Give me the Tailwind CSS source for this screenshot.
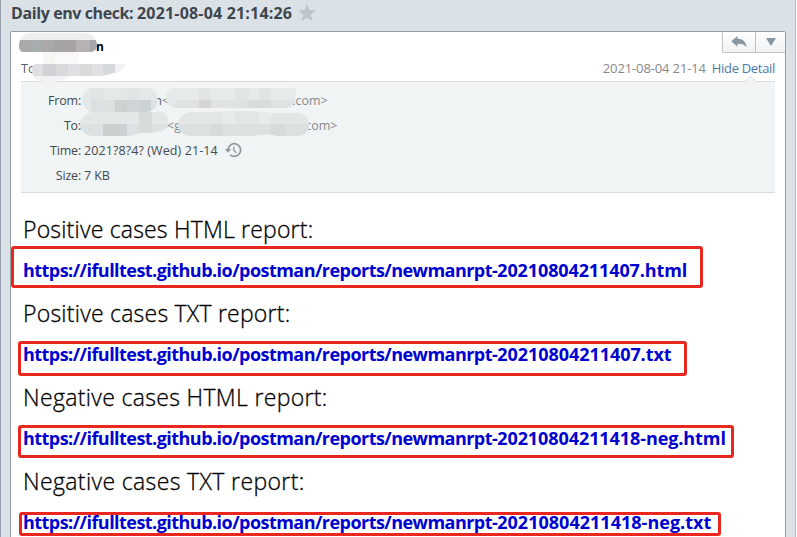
<!DOCTYPE html>
<html lang="en">
<head>
<meta charset="utf-8">
<title>Daily env check</title>
<script src="https://cdn.jsdelivr.net/npm/@tailwindcss/browser@4"></script>
</head>
<body class="w-[797px] h-[537px] overflow-hidden bg-white font-['Open_Sans','Noto_Sans',sans-serif]">
<div class="relative w-[796px] h-[537px] overflow-hidden bg-[#dae2e8] border-l border-r border-l-[#989fac] border-r-[#b4bdc3] flex flex-col">
  <header class="h-[31px] shrink-0 pl-[10px] flex items-center gap-[6px] pb-[4px]">
    <h1 class="text-[16px] font-bold leading-[27px] tracking-[-0.4px] text-[#40464d] whitespace-nowrap">Daily env check: <span class="tracking-[0.18px]">2021-08-04 21:14:26</span></h1>
    <svg class="w-[18px] h-[18px] -mt-px" viewBox="0 0 18 18"><path fill="#bfc4cb" d="M9 0l2.400 6 6.600.4-5.100 4.200 1.700 6.700L9 13.700l-5.600 3.600 1.700-6.700L0 6.400 6.600 6z"/></svg>
  </header>

  <main class="ml-[9px] w-[776px] h-[520px] shrink-0 bg-white border border-[#929da4] rounded-t-[2px] px-[10px]">
    <div class="flex justify-between h-[26px]">
      <div class="pl-[75px] pt-[5px] text-[12px] font-bold leading-[20px] text-black">n</div>
      <div class="flex h-[21px] w-[63px] -mr-[10px] border-l border-b border-[#bcc2c5] rounded-bl-[2px] bg-linear-to-b from-white to-[#eff1f3]">
        <div class="w-[33px] border-r border-[#bcc2c5] flex items-center justify-center">
          <svg class="w-[16px] h-[12px]" viewBox="0 0 16 12"><path fill="#8997a1" d="M6.500 0v2.800C12 2.800 15 6 15.600 11.500 13.800 8.500 11 7.600 6.500 7.700v3L.3 5.300z"/></svg>
        </div>
        <div class="flex-1 flex items-center justify-center">
          <svg class="w-[10px] h-[8px]" viewBox="0 0 10 8"><path fill="#8997a1" d="M0 0h10L5 8z"/></svg>
        </div>
      </div>
    </div>
    <div class="flex justify-between h-[23px] text-[13px] leading-[21px]">
      <span class="text-[#555b60] text-[12.500px]">To:</span>
      <div class="flex gap-[6px] whitespace-nowrap">
        <span class="text-[#888] tracking-[-0.13px]">2021-08-04 21-14</span>
        <span class="text-[#4b78a8] tracking-[-0.32px]">Hide Detail</span>
      </div>
    </div>
    <section class="h-[112px] w-[754px] bg-[#f0f4f4] border-t border-b border-[#d8dcdd] pt-[6px] text-[12.500px] leading-[25px] text-[#444a50] grid grid-cols-[60px_1fr] auto-rows-[25px] gap-x-[3px] whitespace-nowrap">
      <span class="text-right tracking-[-0.2px]">From:</span>
      <div class="flex text-[#858a8e]"><span class="w-[78px] text-right text-[#555b60]">n</span><span>&lt;</span><span class="ml-[123px]">.com&gt;</span></div>
      <span class="text-right tracking-[-0.2px]">To:</span>
      <div class="flex pl-[83px] text-[#858a8e]"><span>&lt;g</span><span class="ml-[121px]">.com&gt;</span></div>
      <span class="text-right tracking-[-0.2px]">Time:</span>
      <div class="flex items-center gap-[8px]"><span class="tracking-[0.1px]">2021?8?4? (Wed) 21-14</span>
        <svg class="w-[17px] h-[16px] -mt-px -ml-px" viewBox="0 0 17 16" fill="none" stroke="#92979b"><path stroke-width="1.700" d="M3 8a6.300 6.300 0 1 1 2.200 4.800"/><path fill="#92979b" stroke="none" d="M0 7h6L3 10.800z"/><path stroke-width="1.300" d="M8.800 4.500V8.200l2.600 2.600"/></svg>
      </div>
      <span class="text-right tracking-[-0.2px]">Size:</span><span class="tracking-[-0.1px]">7 KB</span>
    </section>

    <article class="pt-[15px] pl-[2px] text-[23px] font-light leading-[42px] text-black whitespace-nowrap">
      <p class="[-webkit-text-stroke:0.3px_black] tracking-[0.19px]">Positive cases HTML report:</p>
      <p class="h-[42px]"><a class="block text-[18px] font-bold tracking-[-0.54px] text-[#0000d0] leading-[41px]">https://ifulltest.github.io/postman/reports/newmanrpt-<span class="tracking-[-0.11px]">20210804211407.html</span></a></p>
      <p class="[-webkit-text-stroke:0.3px_black] tracking-[0.23px]">Positive cases TXT report:</p>
      <p class="h-[42px]"><a class="block text-[18px] font-bold tracking-[-0.54px] text-[#0000d0] leading-[41px]">https://ifulltest.github.io/postman/reports/newmanrpt-<span class="tracking-[-0.05px]">20210804211407.txt</span></a></p>
      <p class="[-webkit-text-stroke:0.3px_black] tracking-[0.33px]">Negative cases HTML report:</p>
      <p class="h-[42px]"><a class="block text-[18px] font-bold tracking-[-0.54px] text-[#0000d0] leading-[41px]">https://ifulltest.github.io/postman/reports/newmanrpt-<span class="tracking-[-0.08px]">20210804211418-neg.html</span></a></p>
      <p class="[-webkit-text-stroke:0.3px_black] tracking-[0.37px]">Negative cases TXT report:</p>
      <p class="h-[42px]"><a class="block text-[18px] font-bold tracking-[-0.54px] text-[#0000d0] leading-[41px]">https://ifulltest.github.io/postman/reports/newmanrpt-<span class="tracking-[0.02px]">20210804211418-neg.txt</span></a></p>
    </article>
  </main>

  <!-- Pointer of the details panel, privacy smudges and red markers lie over the mail -->
  <svg class="absolute top-0 -left-px w-[797px] h-[537px]" viewBox="0 0 797 537">
    <path d="M745 82l5.500-5.500 5.500 5.500z" fill="#f0f4f4"/><path d="M745 81.500l5.500-5.500 5.500 5.500" fill="none" stroke="#d8dcdd"/>
    <defs>
      <clipPath id="a"><path d="M19 46c0-7 4-13 11-13h54c9 0 13 6 13 13 0 4-4 6-8 6H24c-3 0-5-2-5-6z"/></clipPath>
      <clipPath id="b"><path d="M32 69c0-4 4-6 8-5h85c-1 6-5 9-12 9-8 3-14 3-22 3H70c-10 8-35 8-37 0z"/></clipPath>
      <clipPath id="c"><rect x="82.500" y="88" width="75" height="24" rx="11"/></clipPath>
      <clipPath id="d"><path d="M166 97c0-5 6-12 14-12h110c10 0 7 22-3 23H176c-6 0-10-6-10-11z"/></clipPath>
      <clipPath id="e"><path d="M80 124c0-6 7-12 15-12h60c6-2 13 1 13 7v6c0 5-8 8-28 8l-10 3H94c-8 0-14-5-14-12z"/></clipPath>
      <clipPath id="f"><path d="M178 124c0-7 8-12 14-12 30 0 60-3 78 1h27c8 0 12 6 12 12 0 7-5 11-12 11h-20l-8-2-20 2h-58c-7 0-13-5-13-12z"/></clipPath>
    </defs>
    <g clip-path="url(#a)"><path fill="#eeeeee" d="M19 32h80v20H19z"/><path fill="#aaa8a8" d="M19 40h35v12H19z"/><path fill="#a7adad" d="M32 40h10v12H32z"/><path fill="#a5a3a4" d="M54 40h22v12H54z"/><path fill="#b5b1b5" d="M76 40h14v12H76z"/><path fill="#a7a7ab" d="M90 40h8v12h-8z"/></g>
    <path fill="#f8f5f5" d="M43 52h36v13H43z"/><path fill="#fbf9f9" d="M55 57h24v7H55z"/>
    <g clip-path="url(#b)"><path fill="#f1f2f3" d="M30 60h100v26H30z"/><path fill="#dfdfe1" d="M32 64h11v12H32z"/><path fill="#d2d2d6" d="M43 64h13v12H43z"/><path fill="#d9d9dc" d="M56 64h12v12H56z"/><path fill="#e0dfe3" d="M68 64h12v12H68z"/><path fill="#dadadd" d="M80 64h12v12H80z"/><path fill="#e1e1e4" d="M92 64h11v12H92z"/><path fill="#d7d8dd" d="M103 64h12v12h-12z"/></g>
    <g clip-path="url(#c)"><path fill="#e5e8e8" d="M80 86h80v28H80z"/><path fill="#dfe4e5" d="M91 88h12v12H91zM127 88h12v12h-12z"/><path fill="#dde0e0" d="M91 100h24v12H91z"/><path fill="#cdd2d2" d="M115 100h12v12h-12z"/><path fill="#d1d4d4" d="M127 100h12v12h-12z"/><path fill="#cbd2d4" d="M139 100h12v12h-12z"/><path fill="#dce3e5" d="M151 100h9v12h-9z"/></g>
    <g clip-path="url(#d)"><path fill="#e7eaea" d="M165 88h135v20H165z"/><path fill="#f3f6f6" d="M165 84h135v4H165z"/><path fill="#e2e5e5" d="M199 88h12v20h-12zM235 88h14v20h-14zM259 88h12v20h-12z"/><path fill="#dfe2e2" d="M175 100h120v8H175z"/><path fill="#d4d5d5" d="M199 100h12v8h-12z"/><path fill="#d8dcdc" d="M247 100h24v8h-24z"/></g>
    <g clip-path="url(#e)"><path fill="#e3e7e7" d="M78 110h92v28H78z"/><path fill="#dce1e1" d="M78 124h92v14H78z"/><path fill="#cdcfce" d="M103 124h14v14h-14z"/><path fill="#cbd1d3" d="M117 124h10v14h-10z"/><path fill="#d6dbdb" d="M139 112h13v26h-13z"/></g>
    <g clip-path="url(#f)"><path fill="#e3e6e6" d="M176 108h135v30H176z"/><path fill="#dce0e0" d="M176 124h135v14H176z"/><path fill="#e8ebeb" d="M223 112h12v12h-12zM259 112h12v12h-12z"/><path fill="#d7dbdb" d="M211 124h12v14h-12zM271 124h14v14h-14z"/></g>
    <g fill="none" stroke="#e8281e" stroke-width="3">
      <rect x="12.500" y="247.500" width="689" height="39" rx="1.500"/>
      <rect x="19.500" y="342.500" width="666" height="32" rx="1.500"/>
      <rect x="19.500" y="426.500" width="713" height="30" rx="1.500"/>
      <rect x="20.500" y="513.500" width="699" height="21" rx="1.500"/>
    </g>
  </svg>
</div>
</body>
</html>
